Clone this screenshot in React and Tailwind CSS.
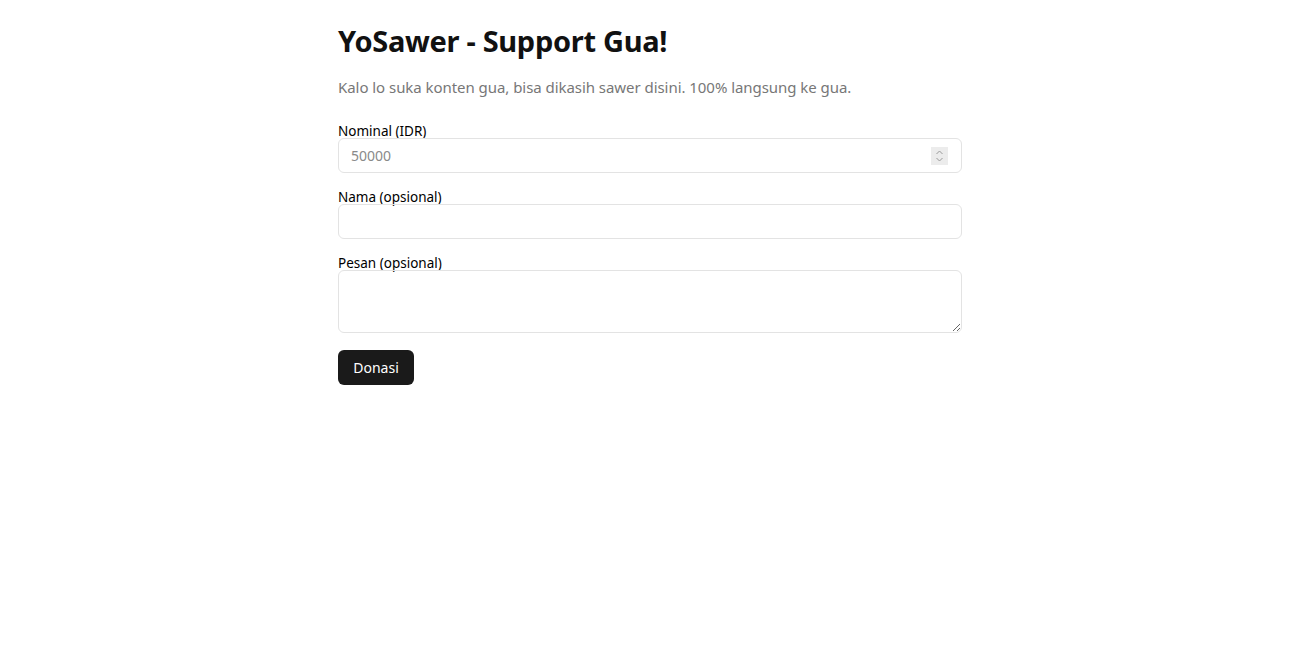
export default function App() {
    return (
        <div className="min-h-screen bg-white font-['Noto_Sans',sans-serif] text-black">
            <div className="mx-auto w-[624px] pt-[24px]">
                <h1 className="text-[29px] font-bold leading-[34px] tracking-[-0.3px] text-[#111]">YoSawer - Support Gua!</h1>
                <p className="mt-[17px] text-[15px] leading-[24px] tracking-[-0.05px] text-[#777]">
                    Kalo lo suka konten gua, bisa dikasih sawer disini. 100% langsung ke gua.
                </p>
                <form className="mt-[25px] flex flex-col" onSubmit={(e) => e.preventDefault()}>
                    <label className="block h-[14px] text-[13.5px] leading-[14px]">Nominal (IDR)</label>
                    <div className="relative">
                        <input
                            type="number"
                            placeholder="50000"
                            className="h-[35px] w-full rounded-[6px] border border-[#e3e3e3] px-[12px] text-[14px] placeholder:text-[#8a8a8a] outline-none"
                        />
                        <div className="pointer-events-none absolute right-[14px] top-[9px] flex h-[18px] w-[17px] flex-col items-center justify-center bg-[#ececec]">
                            <svg width="9" height="14" viewBox="0 0 9 14" fill="none" stroke="#9a9a9a" strokeWidth="1">
                                <path d="M1.5 5 L4.5 2 L7.5 5" />
                                <path d="M1.5 9 L4.5 12 L7.5 9" />
                            </svg>
                        </div>
                    </div>
                    <label className="mt-[17px] block h-[14px] text-[13.5px] leading-[14px]">Nama (opsional)</label>
                    <input
                        type="text"
                        className="h-[35px] w-full rounded-[6px] border border-[#e3e3e3] px-[12px] text-[14px] outline-none"
                    />
                    <label className="mt-[17px] block h-[14px] text-[13.5px] leading-[14px]">Pesan (opsional)</label>
                    <textarea className="block h-[63px] w-full rounded-[6px] border border-[#e3e3e3] px-[12px] py-[8px] text-[14px] outline-none" />
                    <div className="mt-[17px]">
                        <button
                            type="submit"
                            className="h-[35px] w-[76px] rounded-[6px] bg-[#1a1a1a] text-center text-[14px] text-white"
                        >
                            Donasi
                        </button>
                    </div>
                </form>
            </div>
        </div>
    );
}
